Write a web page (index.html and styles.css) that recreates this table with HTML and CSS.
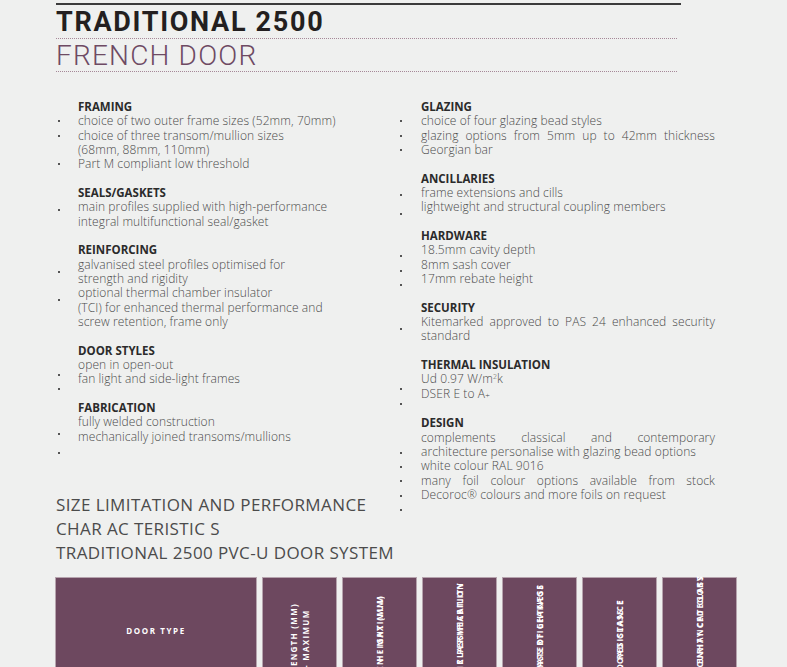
FILE: index.html
```html
<!DOCTYPE html>
<html lang="en">
<head>
<meta charset="utf-8">
<title>Traditional 2500 French Door</title>
<link rel="stylesheet" href="styles.css">
</head>
<body>
<div class="page">
  <header class="masthead">
    <div class="rule"></div>
    <h1 class="title">TRADITIONAL 2500</h1>
    <h2 class="subtitle">FRENCH DOOR</h2>
  </header>

  <div class="specs">
    <div class="col col-left">
      <section class="spec">
        <h3 class="spec-title">FRAMING</h3>
        <div class="spec-body">
          <div class="dots"><i></i><i></i><i class="gap"></i><i></i></div>
          <div class="lines">
            <div>choice of two outer frame sizes (52mm, 70mm)</div>
            <div>choice of three transom/mullion sizes</div>
            <div>(68mm, 88mm, 110mm)</div>
            <div>Part M compliant low threshold</div>
          </div>
        </div>
      </section>
      <section class="spec">
        <h3 class="spec-title">SEALS/GASKETS</h3>
        <div class="spec-body">
          <div class="dots off-3"><i></i></div>
          <div class="lines">
            <div>main profiles supplied with high-performance</div>
            <div>integral multifunctional seal/gasket</div>
          </div>
        </div>
      </section>
      <section class="spec">
        <h3 class="spec-title">REINFORCING</h3>
        <div class="spec-body">
          <div class="dots off-7"><i></i><i class="gap"></i><i></i></div>
          <div class="lines">
            <div>galvanised steel profiles optimised for</div>
            <div>strength and rigidity</div>
            <div>optional thermal chamber insulator</div>
            <div>(TCI) for enhanced thermal performance and</div>
            <div>screw retention, frame only</div>
          </div>
        </div>
      </section>
      <section class="spec">
        <h3 class="spec-title">DOOR STYLES</h3>
        <div class="spec-body">
          <div class="dots off-10"><i></i><i></i></div>
          <div class="lines">
            <div>open in open-out</div>
            <div>fan light and side-light frames</div>
          </div>
        </div>
      </section>
      <section class="spec">
        <h3 class="spec-title">FABRICATION</h3>
        <div class="spec-body">
          <div class="dots off-12"><i></i><i class="tall"></i></div>
          <div class="lines">
            <div>fully welded construction</div>
            <div>mechanically joined transoms/mullions</div>
          </div>
        </div>
      </section>
      <h2 class="size-title">SIZE LIMITATION AND PERFORMANCE<br>CHAR AC TERISTIC S<br>TRADITIONAL 2500 PVC-U DOOR SYSTEM</h2>
    </div>

    <div class="col col-right">
      <section class="spec">
        <h3 class="spec-title">GLAZING</h3>
        <div class="spec-body">
          <div class="dots"><i></i><i></i><i></i></div>
          <div class="lines">
            <div>choice of four glazing bead styles</div>
            <div class="j">glazing options from 5mm up to 42mm thickness</div>
            <div>Georgian bar</div>
          </div>
        </div>
      </section>
      <section class="spec">
        <h3 class="spec-title">ANCILLARIES</h3>
        <div class="spec-body">
          <div class="dots off-2"><i></i><i class="tall"></i></div>
          <div class="lines">
            <div>frame extensions and cills</div>
            <div>lightweight and structural coupling members</div>
          </div>
        </div>
      </section>
      <section class="spec">
        <h3 class="spec-title">HARDWARE</h3>
        <div class="spec-body">
          <div class="dots off-6"><i></i><i></i><i></i></div>
          <div class="lines">
            <div>18.5mm cavity depth</div>
            <div>8mm sash cover</div>
            <div>17mm rebate height</div>
          </div>
        </div>
      </section>
      <section class="spec">
        <h3 class="spec-title">SECURITY</h3>
        <div class="spec-body">
          <div class="dots off-7"><i></i></div>
          <div class="lines">
            <div class="j">Kitemarked approved to PAS 24 enhanced security</div>
            <div>standard</div>
          </div>
        </div>
      </section>
      <section class="spec">
        <h3 class="spec-title">THERMAL INSULATION</h3>
        <div class="spec-body">
          <div class="dots off-10"><i></i><i></i></div>
          <div class="lines">
            <div>Ud 0.97 W/m<sup>2</sup>k</div>
            <div>DSER E to A<small>+</small></div>
          </div>
        </div>
      </section>
      <section class="spec">
        <h3 class="spec-title">DESIGN</h3>
        <div class="spec-body">
          <div class="dots off-15"><i></i><i></i><i></i><i></i><i></i></div>
          <div class="lines">
            <div class="j">complements classical and contemporary</div>
            <div>architecture personalise with glazing bead options</div>
            <div>white colour RAL 9016</div>
            <div class="j">many foil colour options available from stock</div>
            <div>Decoroc® colours and more foils on request</div>
          </div>
        </div>
      </section>
    </div>
  </div>

  <table class="perf">
    <thead>
      <tr>
        <th class="door">DOOR TYPE</th>
        <th class="rot"><div class="rot-in p25"><div class="vt"><span>FRAME LENGTH (MM)</span><span class="later">MIN - MAXIMUM</span></div></div></th>
        <th class="rot"><div class="rot-in p17"><div class="vt stack"><span>FRAME HEIGHT (MM)</span><span>MIN - MAXIMUM</span></div></div></th>
        <th class="rot"><div class="rot-in p4"><div class="vt stack"><span>AIR PERMEABILITY</span><span>CLASSIFICATION</span></div></div></th>
        <th class="rot"><div class="rot-in p6"><div class="vt stack"><span>WATERTIGHTNESS</span><span>CLASS OF LEAKAGE</span></div></div></th>
        <th class="rot"><div class="rot-in p21"><div class="vt stack"><span>WIND RESISTANCE</span><span>LOAD CLASS E</span></div></div></th>
        <th class="rot"><div class="rot-in pn3"><div class="vt stack"><span>SECURITY CATEGORY</span><span>ENHANCED CLASS</span></div></div></th>
      </tr>
    </thead>
  </table>
</div>
</body>
</html>
```

FILE: styles.css
```css
* { box-sizing: border-box; }

body {
  margin: 0;
  background: #eff0ef;
  font-family: "Open Sans", "Noto Sans", sans-serif;
  color: #4a4a4a;
}

.page {
  padding: 3px 0 0 56px;
  width: 760px;
}

/* masthead */
.rule {
  width: 625px;
  height: 2px;
  background: #3b3b3b;
}

.title {
  margin: 2px 0 0;
  width: 621px;
  padding-bottom: 1px;
  font: 700 27px/30px Roboto, "Liberation Sans", sans-serif;
  letter-spacing: 1.7px;
  color: #231f20;
  border-bottom: 1px dotted #a68898;
}

.subtitle {
  margin: 2px 0 0;
  width: 621px;
  font: 300 28px/30px Roboto, "Liberation Sans", sans-serif;
  letter-spacing: 1.2px;
  color: #6e4a63;
  border-bottom: 1px dotted #a68898;
}

/* specification columns */
.specs {
  display: grid;
  grid-template-columns: 342px 317px;
  margin-top: 28px;
}

.spec + .spec { margin-top: 14.33px; }

.spec-title {
  margin: 0;
  padding-left: 22px;
  font: 700 11.5px/14.33px "Open Sans", sans-serif;
  color: #2b2b2b;
}

.col-right .spec-title { padding-left: 23px; }

.spec-body { display: flex; }

.dots {
  flex: none;
  width: 22px;
  height: 0;
}

.col-right .dots { width: 23px; }

.dots i {
  display: block;
  height: 14.33px;
  background: linear-gradient(#555, #555) no-repeat 2px 50% / 2px 2px;
}

.dots i.gap { background: none; }

.dots i.tall { height: 17px; background-position: 2px 70%; }

.off-2 { padding-top: 2px; }
.off-3 { padding-top: 3px; }
.off-6 { padding-top: 6px; }
.off-7 { padding-top: 7px; }
.off-10 { padding-top: 10px; }
.off-12 { padding-top: 12px; }
.off-15 { padding-top: 15px; }

.lines {
  flex: 1;
  font-size: 12px;
  font-weight: 300;
  line-height: 14.33px;
  letter-spacing: 0.1px;
  color: #4a4a4a;
}

.lines div { white-space: nowrap; }

.lines .j {
  white-space: normal;
  text-align: justify;
  text-align-last: justify;
}

.lines sup {
  font-size: 7px;
  line-height: 0;
  vertical-align: 4px;
}

.lines small {
  font-size: 8px;
}

.size-title {
  margin: 49px 0 0;
  font: 400 17px/24px "Open Sans", sans-serif;
  letter-spacing: 0.4px;
  color: #4b4b4b;
  white-space: nowrap;
}

/* performance table */
.perf {
  margin: 12px 0 0 -6px;
  border-collapse: separate;
  border-spacing: 5px 0;
}

.perf th {
  height: 108px;
  padding: 0;
  background: #6d485f;
  border: 1px solid #b6a4ae;
  color: #fff;
}

.perf th.door {
  width: 202px;
  vertical-align: middle;
  text-align: center;
  font: 700 8px/10px "Open Sans", sans-serif;
  letter-spacing: 1.6px;
}

.perf th.rot {
  width: 75px;
  vertical-align: top;
}

.rot-in {
  display: flex;
  justify-content: center;
  align-items: flex-start;
  height: 106px;
}

.pn3 { margin-top: -3px; }
.p4 { padding-top: 4px; }
.p6 { padding-top: 6px; }
.p17 { padding-top: 17px; }
.p21 { padding-top: 21px; }
.p25 { padding-top: 25px; }

.vt {
  flex: none;
  height: max-content;
  writing-mode: vertical-rl;
  transform: rotate(180deg);
  text-align: end;
  font: 700 8px "Open Sans", sans-serif;
  letter-spacing: 1.3px;
  white-space: nowrap;
}

.vt span {
  display: block;
  line-height: 12px;
}

.vt .later { padding-inline-end: 7px; }

.vt.stack span { line-height: 0; }
```
